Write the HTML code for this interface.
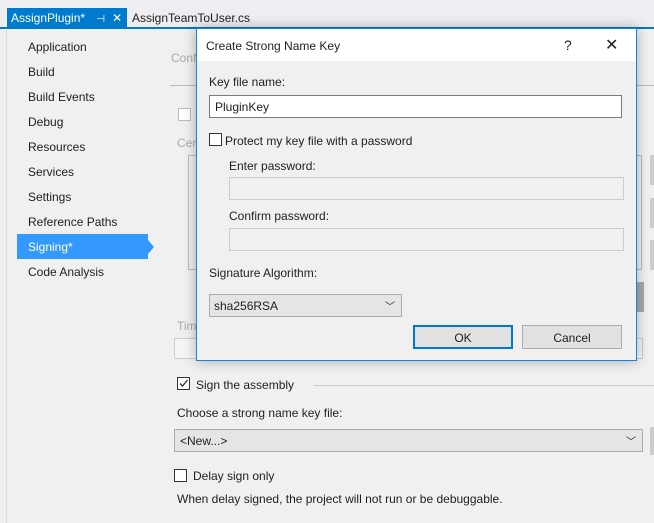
<!DOCTYPE html><html><head><style>
*{box-sizing:border-box;margin:0;padding:0}
body{width:654px;height:523px;overflow:hidden;background:#eeeef2;font-family:"Liberation Sans",sans-serif;font-size:12px;color:#1e1e1e;position:relative}
.a{position:absolute;white-space:nowrap}
.cb{position:absolute;width:13px;height:13px;border:1px solid #333;background:#fff}
</style></head><body>
<div class="a" style="left:0;top:29px;width:654px;height:494px;background:#f0f0f0"></div>
<div class="a" style="left:0;top:29px;width:7px;height:494px;background:#eeeef2;border-right:1px solid #ddd"></div>
<div class="a" style="left:7px;top:8px;width:120px;height:21px;background:#007acc;color:#fff;padding:3px 0 0 4px">AssignPlugin* <span style="margin-left:8px;font-size:10px">⊣</span><span style="margin-left:7px">✕</span></div>
<div class="a" style="left:132px;top:11px;font-size:12px">AssignTeamToUser.cs</div>
<div class="a" style="left:0;top:27px;width:654px;height:2px;background:#007acc"></div>
<div class="a" style="left:28px;top:35px;line-height:25px">Application<br>Build<br>Build Events<br>Debug<br>Resources<br>Services<br>Settings<br>Reference Paths</div>
<div class="a" style="left:17px;top:234px;width:131px;height:25px;background:#3399ff;color:#fff;padding:6px 0 0 11px">Signing*</div>
<div class="a" style="left:148px;top:240px;width:0;height:0;border-top:7px solid transparent;border-bottom:7px solid transparent;border-left:6px solid #3399ff"></div>
<div class="a" style="left:28px;top:265px">Code Analysis</div>
<div class="a" style="left:171px;top:51px;color:#aaa">Conf</div>
<div class="a" style="left:170px;top:85px;width:484px;height:1px;background:#bbb"></div>
<div class="cb" style="left:178px;top:108px;border-color:#bbb"></div>
<div class="a" style="left:177px;top:136px;color:#aaa">Cer</div>
<div class="a" style="left:188px;top:155px;width:454px;height:115px;border:1px solid #bbb"></div>
<div class="a" style="left:650px;top:155px;width:4px;height:30px;background:#ccc"></div>
<div class="a" style="left:650px;top:198px;width:4px;height:30px;background:#ccc"></div>
<div class="a" style="left:650px;top:240px;width:4px;height:30px;background:#ccc"></div>
<div class="a" style="left:636px;top:282px;width:8px;height:30px;background:#aaa"></div>
<div class="a" style="left:177px;top:319px;color:#aaa">Tim</div>
<div class="a" style="left:174px;top:338px;width:469px;height:21px;border:1px solid #ccc;background:#f5f5f5"></div>
<div class="cb" style="left:177px;top:377px"><svg width="11" height="11" style="position:absolute;left:0;top:0"><path d="M2 5.5 L4.5 8 L9.5 2" stroke="#333" stroke-width="1.3" fill="none"/></svg></div>
<div class="a" style="left:196px;top:378px">Sign the assembly</div>
<div class="a" style="left:314px;top:385px;width:340px;height:1px;background:#ccc"></div>
<div class="a" style="left:177px;top:406px">Choose a strong name key file:</div>
<div class="a" style="left:174px;top:429px;width:469px;height:23px;border:1px solid #acacac;background:#e5e5e5;padding:4px 0 0 5px">&lt;New...&gt;<span style="position:absolute;right:6px;top:3px;font-size:10px">﹀</span></div>
<div class="a" style="left:650px;top:427px;width:4px;height:28px;background:#ccc"></div>
<div class="cb" style="left:174px;top:469px"></div>
<div class="a" style="left:193px;top:469px">Delay sign only</div>
<div class="a" style="left:177px;top:492px">When delay signed, the project will not run or be debuggable.</div>

<div class="a" style="left:196px;top:28px;width:441px;height:333px;border:1px solid #1883d7;background:#f0f0f0;box-shadow:0 0 12px rgba(0,0,0,.3)">
<div class="a" style="left:0;top:0;width:439px;height:32px;background:#fff"></div>
<div class="a" style="left:9px;top:10px">Create Strong Name Key</div>
<div class="a" style="left:367px;top:8px;font-size:14px">?</div>
<div class="a" style="left:408px;top:6px;font-size:16px">✕</div>
<div class="a" style="left:12px;top:46px">Key file name:</div>
<div class="a" style="left:12px;top:66px;width:413px;height:23px;border:1px solid #7a7a7a;background:#fff;padding:4px 0 0 5px">PluginKey</div>
<div class="cb" style="left:12px;top:104px"></div>
<div class="a" style="left:28px;top:105px">Protect my key file with a password</div>
<div class="a" style="left:32px;top:130px">Enter password:</div>
<div class="a" style="left:32px;top:148px;width:395px;height:23px;border:1px solid #ccc"></div>
<div class="a" style="left:32px;top:180px">Confirm password:</div>
<div class="a" style="left:32px;top:199px;width:395px;height:23px;border:1px solid #ccc"></div>
<div class="a" style="left:12px;top:237px">Signature Algorithm:</div>
<div class="a" style="left:12px;top:265px;width:193px;height:23px;border:1px solid #acacac;background:#e5e5e5;padding:4px 0 0 4px">sha256RSA<span style="position:absolute;right:6px;top:3px;font-size:10px">﹀</span></div>
<div class="a" style="left:216px;top:296px;width:100px;height:24px;border:2px solid #0078d7;background:#e1e1e1;text-align:center;padding-top:4px">OK</div>
<div class="a" style="left:325px;top:296px;width:100px;height:24px;border:1px solid #adadad;background:#e1e1e1;text-align:center;padding-top:5px">Cancel</div>
</div>
</body></html>
